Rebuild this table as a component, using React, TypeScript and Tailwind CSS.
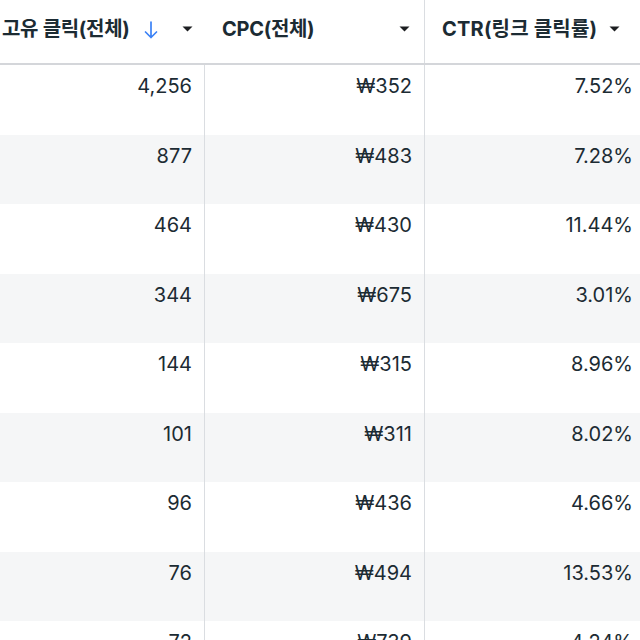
const rows = [
  ["4,256", "₩352", "7.52%"],
  ["877", "₩483", "7.28%"],
  ["464", "₩430", "11.44%"],
  ["344", "₩675", "3.01%"],
  ["144", "₩315", "8.96%"],
  ["101", "₩311", "8.02%"],
  ["96", "₩436", "4.66%"],
  ["76", "₩494", "13.53%"],
  ["72", "₩739", "4.24%"],
];

function Caret() {
  return (
    <svg width="11" height="6" viewBox="0 0 11 6" className="shrink-0">
      <path d="M0.5 0.5 H10.5 L5.5 5.5 Z" fill="#1c1e21" />
    </svg>
  );
}

function SortArrow() {
  return (
    <svg width="14" height="18" viewBox="0 0 14 18" className="shrink-0">
      <path d="M7 1 V16.5 M1.5 11 L7 16.5 L12.5 11" stroke="#3b82f6" strokeWidth="1.7" fill="none" strokeLinecap="round" strokeLinejoin="round" />
    </svg>
  );
}

export default function App() {
  return (
    <div
      className="w-[640px] h-[640px] overflow-hidden bg-white text-[#1c2b33]"
      style={{ fontFamily: 'Inter, "Noto Sans CJK KR", sans-serif' }}
    >
      <div className="w-[660px] -ml-[15px]">
        <div className="flex h-[65px] border-b-2 border-[#d4d6da]">
          <div className="w-[220px] flex items-center pl-[17px] pr-[12px] pb-[6px]">
            <span className="text-[20px] font-bold tracking-[-0.3px]">고유 클릭(전체)</span>
            <span className="ml-[14px] mt-[2px]"><SortArrow /></span>
            <span className="ml-auto"><Caret /></span>
          </div>
          <div className="w-[220px] flex items-center pl-[17px] pr-[14px] pb-[6px] border-r border-[#dadde1]">
            <span className="text-[20px] font-bold tracking-[-0.3px]">CPC(전체)</span>
            <span className="ml-auto"><Caret /></span>
          </div>
          <div className="w-[220px] flex items-center pl-[17px] pr-[25px] pb-[6px]">
            <span className="text-[20px] font-bold tracking-[0.2px]">CTR(링크 클릭률)</span>
            <span className="ml-auto"><Caret /></span>
          </div>
        </div>
        {rows.map((r, i) => (
          <div
            key={i}
            className={`flex h-[69.5px] text-[20px] ${i % 2 === 1 ? "bg-[#f5f6f7]" : "bg-white"}`}
          >
            <div className="w-[220px] text-right pr-[12px] pt-[6px] border-r border-[#dadde1]">{r[0]}</div>
            <div className="w-[220px] text-right pr-[12px] pt-[6px] border-r border-[#dadde1]">{r[1]}</div>
            <div className="w-[220px] text-right pr-[12px] pt-[6px]">{r[2]}</div>
          </div>
        ))}
      </div>
    </div>
  );
}
